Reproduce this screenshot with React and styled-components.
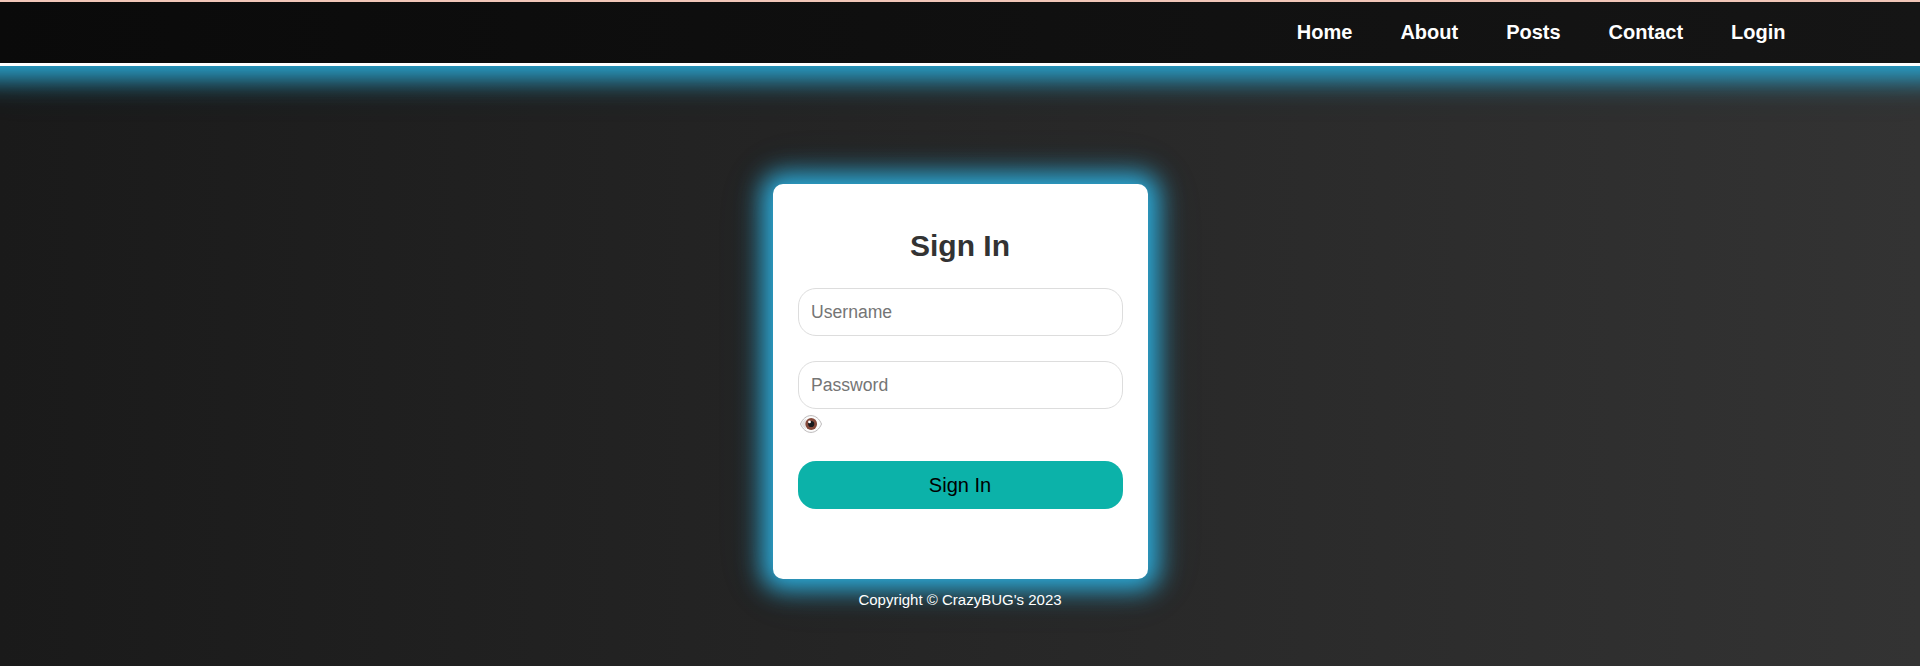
import React from "react";
import styled, { createGlobalStyle } from "styled-components";

const GlobalStyle = createGlobalStyle`
  * { box-sizing: border-box; }
  body {
    margin: 0;
    font-family: Arial, "Liberation Sans", sans-serif;
  }
`;

const Page = styled.div`
  min-height: 666px;
  display: flex;
  flex-direction: column;
  overflow: hidden;
  background: linear-gradient(to right, #1a1a1a, #333333);
`;

const Header = styled.header`
  height: 66px;
  flex: none;
  display: flex;
  align-items: center;
  justify-content: flex-end;
  padding: 0 134.5px 2px 0;
  border-top: 2px solid #f1c6b8;
  border-bottom: 3px solid #ffffff;
  background: linear-gradient(to right, #0a0a0a, #151515);
  box-shadow: 0 -45px 23px 59px #28a0ca, 0 0 50px 20px rgba(40, 161, 204, 0.06);
`;

const Nav = styled.nav`
  display: flex;
  gap: 48px;
`;

const NavLink = styled.a`
  color: #ffffff;
  font-size: 20px;
  font-weight: bold;
  line-height: 24px;
  text-decoration: none;
`;

const Main = styled.main`
  display: flex;
  flex-direction: column;
  align-items: center;
  padding: 118px 0 0 1px;
`;

const Card = styled.form`
  width: 375px;
  height: 395px;
  display: flex;
  flex-direction: column;
  padding: 44px 25px 0;
  border-radius: 10px;
  background: #ffffff;
  box-shadow: 0 0 25px 11px #2caad8, 0 0 50px 14px rgba(42, 165, 209, 0.08);
`;

const Title = styled.h1`
  margin: 0 1px 24px 0;
  color: #333333;
  font-size: 30px;
  line-height: 36px;
  text-align: center;
`;

const Field = styled.input`
  width: 100%;
  height: 48px;
  margin-bottom: ${(p) => p.$gap}px;
  padding: 0 12px;
  border: 1px solid #dddddd;
  border-radius: 18px;
  background: #ffffff;
  font: 17.6px Arial, "Liberation Sans", sans-serif;
  outline: none;
  &::placeholder { color: #757575; }
`;

const EyeToggle = styled.span`
  display: flex;
  width: 22px;
  height: 18px;
  margin: 0 0 28px 2px;
  cursor: pointer;
`;

const SubmitButton = styled.button`
  width: 100%;
  height: 48px;
  padding: 0 1px 0 0;
  border: 0;
  border-radius: 18px;
  background: #0cb2a9;
  color: #000000;
  font: 20px Arial, "Liberation Sans", sans-serif;
`;

const Footer = styled.footer`
  position: relative;
  margin-top: 12px;
  padding-right: 1px;
  color: #ffffff;
  font-size: 15px;
  line-height: 18px;
`;

const links = ["Home", "About", "Posts", "Contact", "Login"];

function Eye() {
  return (
    <svg width="22" height="18" viewBox="0 0 22 18">
      <path d="M.5 9C2.500 4 6.400.6 11 .6S19.500 4 21.500 9C19.500 14 15.600 17.400 11 17.400S2.500 14 .5 9Z" fill="#fcfcfc" stroke="#b5b2b3" strokeWidth=".9" />
      <path d="M1.500 9Q3 5.500 6 3.500Q4.500 9 6 14.500Q3 12.500 1.500 9Z" fill="#e4e3e3" />
      <circle cx="11.200" cy="9" r="5.900" fill="#84493a" />
      <circle cx="11.200" cy="9" r="3.100" fill="#18191c" />
      <circle cx="9.500" cy="6.900" r="1.400" fill="#ffffff" />
    </svg>
  );
}

export default function App() {
  return (
    <>
      <GlobalStyle />
      <Page>
        <Header>
          <Nav>
            {links.map((label) => (
              <NavLink key={label} href="#">{label}</NavLink>
            ))}
          </Nav>
        </Header>
        <Main>
          <Card>
            <Title>Sign In</Title>
            <Field type="text" placeholder="Username" $gap={25} />
            <Field type="password" placeholder="Password" $gap={6} />
            <EyeToggle><Eye /></EyeToggle>
            <SubmitButton type="button">Sign In</SubmitButton>
          </Card>
          <Footer>Copyright © CrazyBUG's 2023</Footer>
        </Main>
      </Page>
    </>
  );
}
